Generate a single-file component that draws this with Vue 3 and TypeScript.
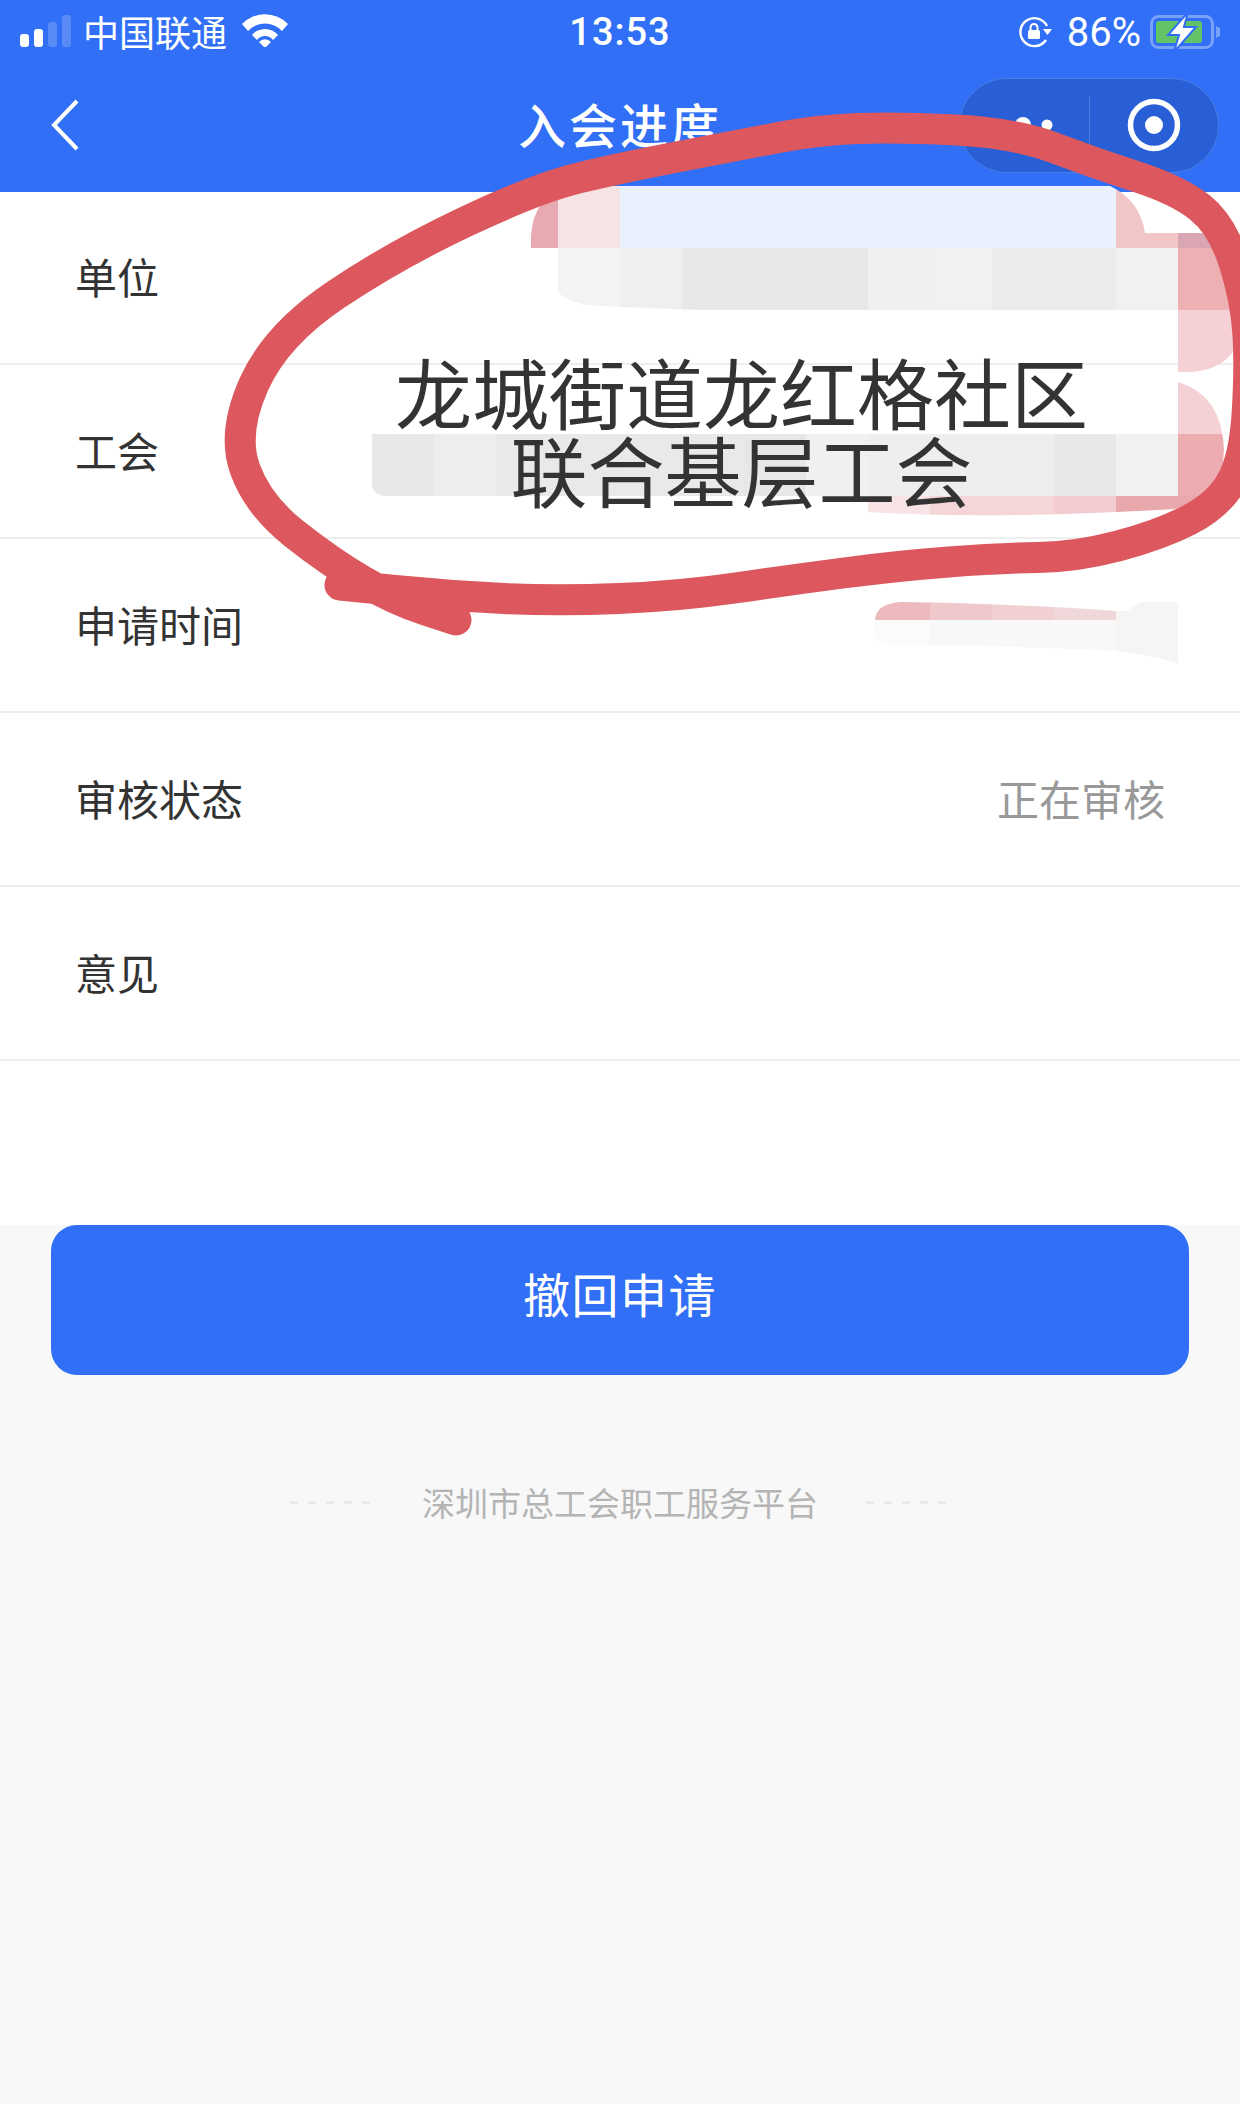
<template>
  <div class="page">
    <header class="top">
      <div class="status">
        <div class="status-left">
          <svg class="signal" width="52" height="34" viewBox="0 0 52 34">
            <rect x="0" y="20" width="9" height="13" rx="3" fill="#fff" />
            <rect x="14" y="15" width="9" height="18" rx="3" fill="#fff" />
            <rect x="28" y="8" width="9" height="25" rx="3" fill="#fff" fill-opacity="0.2" />
            <rect x="42" y="1" width="9" height="32" rx="3" fill="#fff" fill-opacity="0.2" />
          </svg>
          <span class="carrier">中国联通</span>
          <svg class="wifi" width="46" height="34" viewBox="0 0 46 34">
            <path d="M0 11 A32 32 0 0 1 46 11 L40 18 A23 23 0 0 0 6 18 Z" fill="#fff" />
            <path d="M10 22 A17 17 0 0 1 36 22 L31 27 A10 10 0 0 0 15 27 Z" fill="#fff" />
            <path d="M17 29 A8 8 0 0 1 29 29 L23 35 Z" fill="#fff" />
          </svg>
        </div>
        <div class="clock">13:53</div>
        <div class="status-right">
          <svg width="34" height="32" viewBox="0 0 34 32">
            <path d="M27 24 A14 14 0 1 1 28 10" fill="none" stroke="#fff" stroke-width="2.4" />
            <path d="M24 13 H33 L28.500 19 Z" fill="#fff" />
            <rect x="9" y="14" width="12" height="9" rx="1.500" fill="#fff" />
            <path d="M11.500 14 V11.500 A3.500 3.500 0 0 1 18.500 11.500 V14" fill="none" stroke="#fff" stroke-width="2" />
          </svg>
          <span class="percent">86%</span>
          <svg class="battery" width="74" height="40" viewBox="0 0 74 40">
            <rect x="1.500" y="4.500" width="61" height="31" rx="7" fill="none" stroke="#fff" stroke-opacity="0.35" stroke-width="3" />
            <rect x="6" y="9" width="46" height="22" rx="3" fill="#62c466" />
            <path d="M66 14 L70 16 V24 L66 26 Z" fill="#fff" fill-opacity="0.35" />
            <path d="M38 0 L18 23 H29 L24 40 L46 15 H34 Z" fill="#fff" stroke="#306ff6" stroke-width="2" />
          </svg>
        </div>
      </div>
      <div class="nav">
        <svg class="back" width="30" height="52" viewBox="0 0 30 52">
          <path d="M27 2 L4 26 L27 50" fill="none" stroke="#fff" stroke-width="4" />
        </svg>
        <h1>入会进度</h1>
        <div class="capsule">
          <div class="capsule-part">
            <svg width="62" height="20" viewBox="0 0 62 20">
              <circle cx="8" cy="10" r="5" fill="#fff" />
              <circle cx="30" cy="10" r="8" fill="#fff" />
              <circle cx="54" cy="10" r="5.500" fill="#fff" />
            </svg>
          </div>
          <i class="capsule-line"></i>
          <div class="capsule-part">
            <svg width="54" height="54" viewBox="0 0 54 54">
              <circle cx="27" cy="27" r="23.500" fill="none" stroke="#fff" stroke-width="5.500" />
              <circle cx="27" cy="27" r="9" fill="#fff" />
            </svg>
          </div>
        </div>
      </div>
    </header>

    <section class="info">
      <div v-for="row in rows" :key="row.label" class="row">
        <span class="label">{{ row.label }}</span>
        <span class="value">{{ row.value }}</span>
      </div>
    </section>

    <button class="withdraw"><span>撤回申请</span></button>

    <footer class="foot">
      <i class="dash"></i>
      <span>深圳市总工会职工服务平台</span>
      <i class="dash"></i>
    </footer>

    <!-- annotation painted over the screenshot -->
    <svg class="marks" width="1240" height="2104" viewBox="0 0 1240 2104">
      <defs>
        <clipPath id="clip-top">
          <path d="M531 248 V236 Q533 196 570 186 H1110 Q1140 200 1145 233 H1200 Q1230 236 1240 250 V340 Q1225 375 1178 372 V310 H1020 Q800 316 600 306 Q570 305 558 292 V248 Z" />
        </clipPath>
        <clipPath id="clip-mid">
          <path d="M1178 382 Q1222 395 1224 450 Q1222 500 1190 508 Q1000 520 868 512 V496 H385 Q372 494 372 484 V434 H1178 Z" />
        </clipPath>
        <clipPath id="clip-low">
          <path d="M875 620 Q876 604 900 602 Q1020 604 1116 611 L1128 611 Q1135 602 1148 602 H1178 V663 Q1150 655 1116 651 Q1000 645 895 645 Q875 645 875 632 Z" />
        </clipPath>
      </defs>
      <g clip-path="url(#clip-top)">
        <rect v-for="(t, i) in tilesTop" :key="i" :x="t[0]" :y="t[1]" :width="t[2]" :height="t[3]" :fill="t[4]" />
      </g>
      <g clip-path="url(#clip-mid)">
        <rect v-for="(t, i) in tilesMid" :key="i" :x="t[0]" :y="t[1]" :width="t[2]" :height="t[3]" :fill="t[4]" />
      </g>
      <g clip-path="url(#clip-low)">
        <rect v-for="(t, i) in tilesLow" :key="i" :x="t[0]" :y="t[1]" :width="t[2]" :height="t[3]" :fill="t[4]" />
      </g>
      <path :d="scribble" fill="none" stroke="#dc585e" stroke-width="31" stroke-linecap="round" stroke-linejoin="round" />
    </svg>

    <div class="stamp">
      <div>龙城街道龙红格社区</div>
      <div>联合基层工会</div>
    </div>
  </div>
</template>

<script setup lang="ts">
type Tile = [number, number, number, number, string]

const rows = [
  { label: '单位', value: '' },
  { label: '工会', value: '' },
  { label: '申请时间', value: '' },
  { label: '审核状态', value: '正在审核' },
  { label: '意见', value: '' }
]

const tilesTop: Tile[] = [
  [531, 186, 27, 62, '#e8aab2'],
  [558, 186, 62, 62, '#f5e3e6'],
  [620, 186, 496, 62, '#eaf0fd'],
  [1116, 186, 62, 62, '#f2c5c7'],
  [1178, 186, 62, 62, '#dba6b3'],
  [558, 248, 62, 62, '#f3f3f3'],
  [620, 248, 62, 62, '#efefef'],
  [682, 248, 186, 62, '#e8e8e8'],
  [868, 248, 62, 62, '#f0f0f0'],
  [930, 248, 62, 62, '#f1f1f1'],
  [992, 248, 124, 62, '#ececec'],
  [1116, 248, 62, 62, '#f1f1f1'],
  [1178, 248, 62, 62, '#edb0b3'],
  [1178, 310, 62, 66, '#f5d0d5']
]

const tilesMid: Tile[] = [
  [372, 434, 62, 62, '#e8e8e8'],
  [434, 434, 62, 62, '#ededed'],
  [496, 434, 124, 62, '#e9e9e9'],
  [620, 434, 124, 62, '#e8eaea'],
  [744, 434, 62, 62, '#e6e8e7'],
  [806, 434, 62, 62, '#eff0f0'],
  [868, 434, 186, 62, '#eeeeee'],
  [1054, 434, 62, 62, '#e8e8e8'],
  [1116, 434, 62, 62, '#f1f1f1'],
  [1178, 372, 50, 62, '#f5d0d5'],
  [1178, 434, 50, 62, '#edacb0'],
  [868, 496, 62, 20, '#f8e3e5'],
  [930, 496, 124, 20, '#f4d5d8'],
  [1054, 496, 62, 20, '#f2ccd0'],
  [1116, 496, 112, 20, '#e8a8ac']
]

const tilesLow: Tile[] = [
  [875, 600, 55, 20, '#ecb9bd'],
  [930, 600, 62, 20, '#efc8cb'],
  [992, 600, 62, 20, '#f0d0d3'],
  [1054, 600, 62, 20, '#f0d8da'],
  [875, 620, 55, 30, '#fbfbfb'],
  [930, 620, 186, 32, '#f8f8f8'],
  [1116, 600, 62, 64, '#f6f5f3']
]

const points = [
  [340, 585], [450, 596], [558, 601], [680, 596], [790, 580], [897, 566], [1000, 558],
  [1076, 557], [1160, 535], [1218, 505], [1244, 460], [1250, 370], [1246, 300], [1222, 225],
  [1178, 190], [1094, 163], [1015, 133], [897, 127], [818, 130], [739, 145], [620, 168],
  [537, 188], [395, 255], [276, 335], [232, 433], [258, 505], [330, 562], [395, 600], [456, 620]
]

// quadratic curves through the midpoints, so the pen stroke has no corners
const scribble = points.reduce((d, p, i) => {
  if (i === 0) return `M${p[0]} ${p[1]}`
  const prev = points[i - 1]
  return `${d} Q${prev[0]} ${prev[1]} ${(prev[0] + p[0]) / 2} ${(prev[1] + p[1]) / 2}`
}, '') + ` L456 620`
</script>

<style scoped>
.page {
  position: relative;
  width: 1240px;
  height: 2104px;
  overflow: hidden;
  background: #f8f8f8;
  font-family: "Noto Sans CJK SC", "Liberation Sans", sans-serif;
  color: #333;
}

.top {
  background: #306ff6;
  color: #fff;
}

.status {
  height: 64px;
  padding: 0 16px 0 20px;
  display: flex;
  align-items: center;
  justify-content: space-between;
  position: relative;
}

.status-left,
.status-right {
  display: flex;
  align-items: center;
}

.signal {
  margin-top: -2px;
}

.carrier {
  margin-left: 11px;
  margin-top: -2px;
  font-size: 36px;
  line-height: 1;
}

.wifi {
  margin-left: 15px;
  margin-top: -5px;
}

.clock {
  position: absolute;
  left: 0;
  right: 0;
  top: 10px;
  text-align: center;
  font-family: "Roboto", "Liberation Sans", sans-serif;
  font-size: 38px;
  font-weight: 500;
  letter-spacing: 1px;
}

.status-right {
  gap: 14px;
  font-family: "Roboto", "Liberation Sans", sans-serif;
}

.percent {
  font-size: 40px;
  margin-right: -5px;
}

.nav {
  height: 128px;
  box-sizing: border-box;
  padding: 0 21px 6px 50px;
  display: flex;
  align-items: center;
  justify-content: space-between;
  position: relative;
}

.nav h1 {
  position: absolute;
  left: 0;
  right: 0;
  top: 24px;
  margin: 0;
  text-align: center;
  font-size: 48px;
  line-height: 70px;
  font-weight: 500;
  letter-spacing: 3px;
}

.capsule {
  width: 260px;
  height: 95px;
  box-sizing: border-box;
  display: flex;
  align-items: center;
  background: #285fd6;
  border: 1px solid #4a7de6;
  border-radius: 48px;
}

.capsule-part {
  flex: 1;
  display: flex;
  align-items: center;
  justify-content: center;
}

.capsule-line {
  width: 1px;
  height: 58px;
  background: #4a7de6;
}

.info {
  background: #fff;
  padding-bottom: 163px;
}

.row {
  height: 173px;
  box-sizing: border-box;
  border-bottom: 2px solid #eee;
  margin-bottom: 1px;
  padding: 0 75px 4px 75px;
  display: flex;
  align-items: center;
  justify-content: space-between;
  font-size: 42px;
}

.value {
  color: #999;
}

.withdraw {
  display: block;
  width: 1138px;
  height: 150px;
  margin: 0 51px;
  padding: 0 0 16px;
  border: none;
  border-radius: 26px;
  background: #306ff6;
  color: #fff;
  font-family: inherit;
  font-size: 47px;
  letter-spacing: 1.500px;
}

.foot {
  margin-top: 103px;
  display: flex;
  align-items: center;
  justify-content: center;
  gap: 48px;
  font-size: 33px;
  color: #b4b4b4;
}

.dash {
  width: 84px;
  height: 3px;
  background: repeating-linear-gradient(to right, #e8e8e8 0 8px, transparent 8px 18px);
}

.marks {
  position: absolute;
  left: 0;
  top: 0;
}

.stamp {
  position: absolute;
  left: 388px;
  top: 352px;
  width: 707px;
  text-align: center;
  font-size: 77px;
  line-height: 78px;
  color: #333;
}
</style>
